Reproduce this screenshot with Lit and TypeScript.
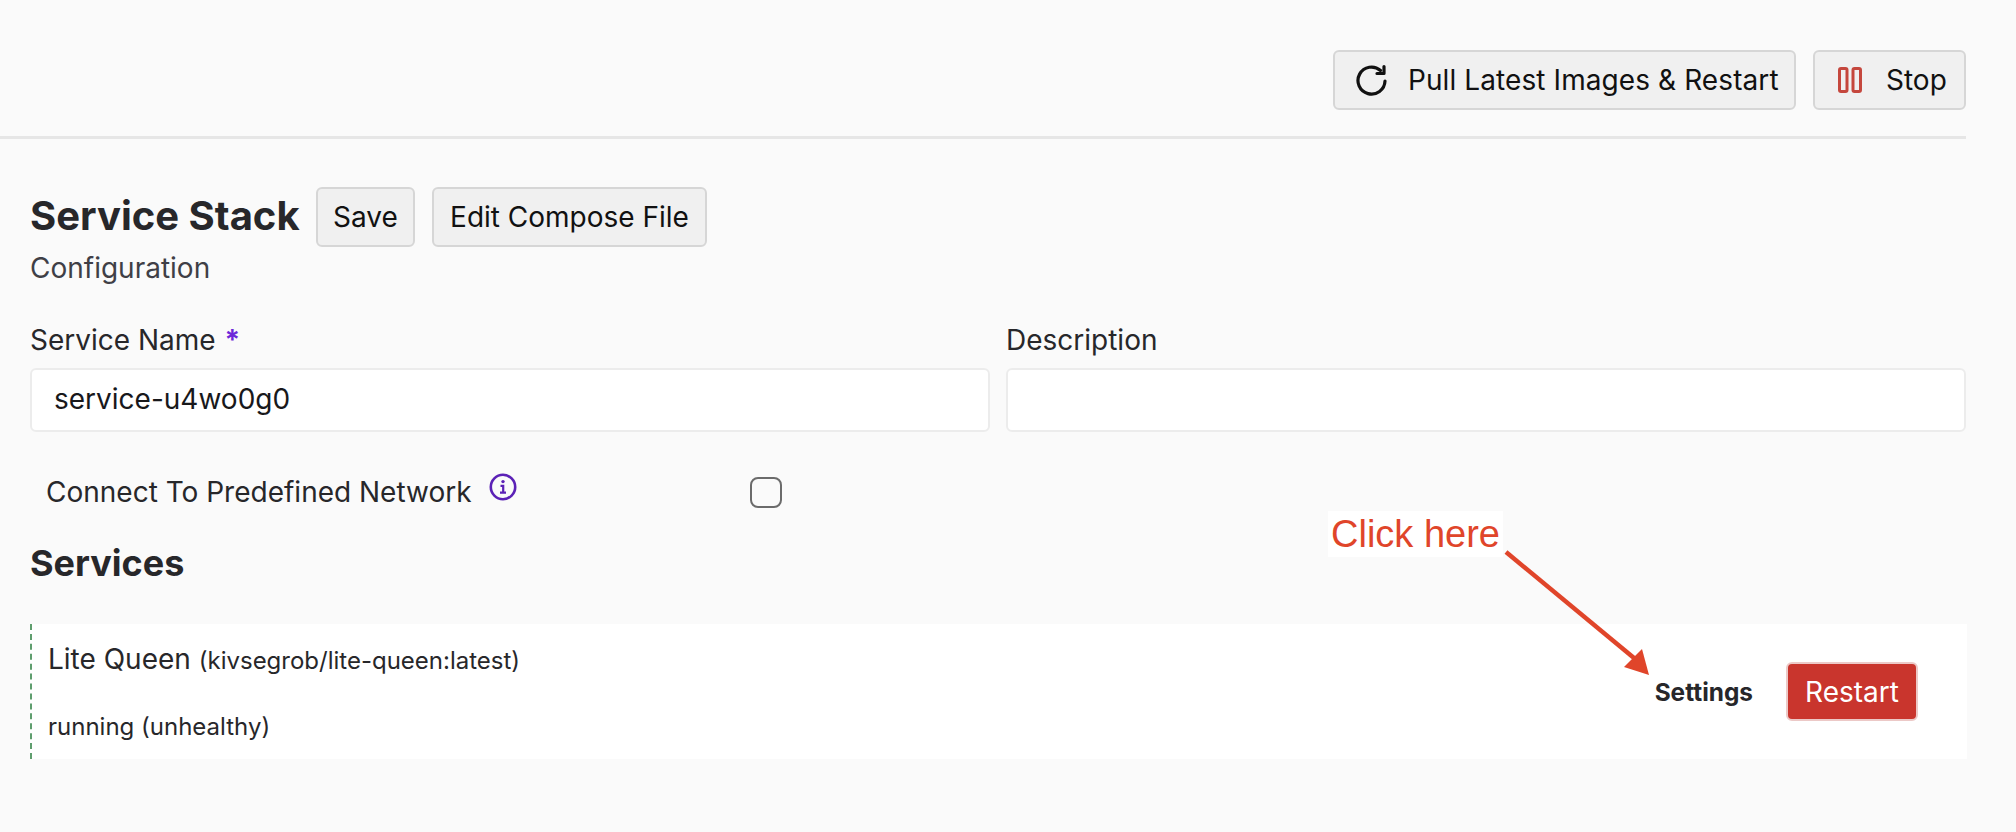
import { LitElement, html, css } from "lit";
import { customElement } from "lit/decorators.js";

@customElement("app-root")
export class AppRoot extends LitElement {
  static styles = css`
    :host {
      display: block;
      position: relative;
      width: 2016px;
      height: 832px;
      overflow: hidden;
      background: #fafafa;
      color: #27272a;
      font-family: Inter, "Noto Sans", sans-serif;
      font-size: 28px;
    }
    .page { width: 1936px; margin-left: 30px; display: flex; flex-direction: column; }
    .top {
      display: flex; justify-content: flex-end; gap: 17px; align-items: flex-start;
      box-sizing: border-box; height: 139px; padding-top: 50px;
      border-bottom: 3px solid #e6e6e6; margin-left: -30px; width: 1966px;
    }
    .btn {
      display: inline-flex; align-items: center; justify-content: center; box-sizing: border-box;
      height: 60px; border: 2px solid #d6d6d6; border-radius: 6px; background: #f0f0f0;
      color: #111; font: inherit; padding: 0; white-space: nowrap;
    }
    .btn svg { display: block; flex: none; }
    .b-pull { width: 463px; gap: 20px; justify-content: flex-start; padding-left: 21px; }
    .b-pull span { letter-spacing: 0.09px; }
    .b-stop { width: 153px; gap: 24px; justify-content: flex-start; padding-left: 23px; }
    .head { display: flex; align-items: center; gap: 17px; margin-top: 48px; }
    h1 { margin: 0 0 3px; font-size: 40px; font-weight: 700; line-height: 55px; width: 269px; white-space: nowrap; }
    .b-save { width: 99px; }
    .b-edit { width: 275px; }
    .sub { margin-top: 6px; line-height: 30px; color: #3f3f46; }
    .fields { display: grid; grid-template-columns: 960px 960px; gap: 16px; margin-top: 42px; }
    label { display: block; line-height: 30px; }
    .req { color: #6d28d9; font-weight: 700; margin-left: 1px; }
    .input {
      box-sizing: border-box; height: 64px; margin-top: 13px; background: #fff;
      border: 2px solid #ececec; border-radius: 6px; padding: 0 22px; line-height: 59px; color: #18181b;
    }
    .check { display: flex; align-items: center; margin-top: 44px; height: 31px; padding-left: 16px; }
    .check .t { white-space: nowrap; }
    .check svg { margin-left: 17px; margin-top: -9px; display: block; }
    .box { position: absolute; left: 750px; top: 477px; width: 32px; height: 31px; box-sizing: border-box; border: 2px solid #6b6b6b; border-radius: 8px; background: #fafafa; }
    h2 { margin: 41px 0 0; font-size: 36px; font-weight: 700; line-height: 30px; }
    .svc {
      margin-top: 46px; height: 135px; width: 1937px; box-sizing: border-box; background: #fff;
      border-left: 2px dashed #5f9e6e; padding-left: 16px; display: flex; align-items: center;
      justify-content: space-between;
    }
    .svc .name { line-height: 30px; margin-top: 3px; font-size: 28px; }
    .svc .name small { font-size: 24px; }
    .svc .state { font-size: 24px; line-height: 30px; margin-top: 36px; }
    .acts { display: flex; align-items: center; gap: 33px; margin-right: 49px; }
    .settings { font-weight: 700; font-size: 24.4px; color: #27272a; }
    .restart {
      display: flex; align-items: center; justify-content: center; box-sizing: border-box;
      width: 132px; height: 59px; border-radius: 6px; background: #c9352d;
      border: 2px solid #ecc9c7; color: #fff; font-size: 28px;
    }
    .note {
      position: absolute; left: 1328px; top: 511px; padding: 0 3px; height: 46px; line-height: 46px;
      background: #fff; color: #e0452a; font-family: "Liberation Sans", Arial, sans-serif; font-size: 38px; white-space: nowrap;
    }
    .arrow { position: absolute; left: 1490px; top: 540px; }
  `;

  render() {
    return html`
      <div class="page">
        <div class="top">
          <button class="btn b-pull">
            <svg width="32" height="32" viewBox="0 0 32 32" fill="none" stroke="#111" stroke-width="3.2" stroke-linecap="round" stroke-linejoin="round">
              <path d="M29 17 A13.5 13.5 0 1 1 24.5 6.5"></path><path d="M28 2.5 V9.5 H21"></path>
            </svg>
            <span>Pull Latest Images &amp; Restart</span>
          </button>
          <button class="btn b-stop">
            <svg width="24" height="26" viewBox="0 0 24 26" fill="none" stroke="#c5473d" stroke-width="3">
              <rect x="1.5" y="1.5" width="7.5" height="23" rx="1.5"></rect><rect x="15" y="1.5" width="7.5" height="23" rx="1.5"></rect>
            </svg>
            <span>Stop</span>
          </button>
        </div>
        <div class="head">
          <h1>Service Stack</h1>
          <button class="btn b-save">Save</button>
          <button class="btn b-edit">Edit Compose File</button>
        </div>
        <div class="sub">Configuration</div>
        <div class="fields">
          <div><label>Service Name <span class="req">*</span></label><div class="input">service-u4wo0g0</div></div>
          <div><label>Description</label><div class="input"></div></div>
        </div>
        <div class="check">
          <span class="t">Connect To Predefined Network</span>
          <svg width="28" height="28" viewBox="0 0 28 28" fill="none" stroke="#5b21b6" stroke-width="2.6">
            <circle cx="14" cy="14" r="12.2"></circle>
            <circle cx="14" cy="8.6" r="1.7" fill="#5b21b6" stroke="none"></circle>
            <path d="M11.5 12.8h2.7v6.6M11 19.6h6" stroke-width="2.2"></path>
          </svg>
          <span class="box"></span>
        </div>
        <h2>Services</h2>
        <div class="svc">
          <div>
            <div class="name">Lite Queen <small>(kivsegrob/lite-queen:latest)</small></div>
            <div class="state">running (unhealthy)</div>
          </div>
          <div class="acts">
            <span class="settings">Settings</span>
            <span class="restart">Restart</span>
          </div>
        </div>
      </div>
      <div class="note">Click here</div>
      <svg class="arrow" width="170" height="145" viewBox="0 0 170 145">
        <path d="M16 12 L144 118" stroke="#e0452a" stroke-width="4.5" fill="none"></path>
        <path d="M159 135 L134 127 L152 109 Z" fill="#e0452a"></path>
      </svg>
    `;
  }
}
